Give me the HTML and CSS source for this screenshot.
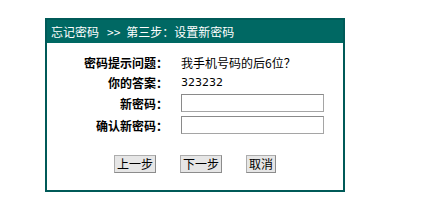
FILE: index.html
```html
<!DOCTYPE html>
<html>
  <head>
    <title>忘记密码</title>
    <link rel="stylesheet" href="styles.css">
  </head>
  <body>
    <div class="box">
      <div class="box-title">忘记密码<span class="sep">&gt;&gt;</span>第三步：设置新密码</div>

      <div class="form">
        <div class="label">密码提示问题：</div>
        <div class="value">我手机号码的后6位？</div>

        <div class="label">你的答案：</div>
        <div class="value answer">323232</div>

        <div class="label">新密码：</div>
        <div class="value"><input type="password" class="text-input"></div>

        <div class="label">确认新密码：</div>
        <div class="value"><input type="password" class="text-input"></div>
      </div>

      <div class="buttons">
        <button class="btn">上一步</button>
        <button class="btn">下一步</button>
        <button class="btn">取消</button>
      </div>
    </div>
  </body>
</html>
```

FILE: styles.css
```css
body {
  margin: 0;
  padding: 0;
  background: #fff;
  font-family: "Noto Sans CJK SC", "DejaVu Sans", sans-serif;
  font-size: 12px;
  color: #000;
}

.box {
  box-sizing: border-box;
  width: 300px;
  height: 174px;
  margin: 18px 0 0 45px;
  border: 2px solid #005a58;
  background: #fff;
}

.box-title {
  height: 23px;
  line-height: 24px;
  padding-left: 4px;
  background: #006863;
  color: #fff;
  font-size: 12px;
  white-space: nowrap;
}

.sep {
  margin: 0 6px 0 8px;
}

.form {
  display: grid;
  grid-template-columns: 121px 143px;
  grid-template-rows: 20px 20px 22px 22px;
  column-gap: 13px;
  align-items: center;
  margin-top: 9px;
}

.label {
  text-align: right;
  font-weight: bold;
  white-space: nowrap;
}

.value {
  white-space: nowrap;
}

.answer {
  font-family: "DejaVu Sans", sans-serif;
  font-size: 11px;
}

.text-input {
  box-sizing: border-box;
  display: block;
  width: 143px;
  height: 18px;
  margin: 0;
  padding: 0 2px;
  border: 1px solid #a5a5a5;
  border-top-color: #8a8a8a;
  border-left-color: #8a8a8a;
  background: #fff;
}

.buttons {
  display: flex;
  justify-content: center;
  gap: 24px;
  margin-top: 19px;
}

.btn {
  height: 18px;
  padding: 0 2px;
  border: 1px solid #adadad;
  border-right-color: #8c8c8c;
  border-bottom-color: #8c8c8c;
  background: #e6e6e6;
  font-family: "Noto Sans CJK SC", sans-serif;
  font-size: 12px;
  line-height: 16px;
  color: #000;
}
```
